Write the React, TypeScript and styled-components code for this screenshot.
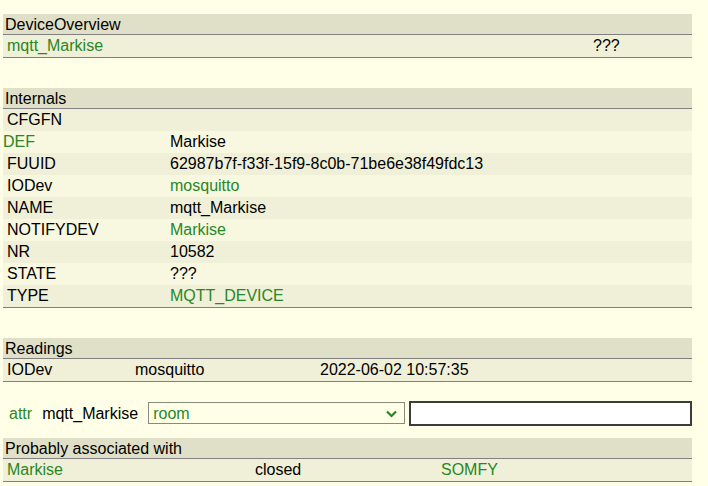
import React from "react";
import styled, { createGlobalStyle } from "styled-components";

const Global = createGlobalStyle`
  html, body {
    margin: 0;
    background: #ffffe7;
  }
  body {
    font-family: "Liberation Sans", Arial, sans-serif;
    font-size: 16px;
    color: #000;
  }
`;

const Page = styled.div`
  padding: 14px 16px 0 3px;
  width: 689px;
`;

const Block = styled.div<{ $gap?: number }>`
  margin-bottom: ${(p) => p.$gap ?? 30}px;
  border-bottom: 1px solid #808080;
`;

const Header = styled.div`
  height: 20px;
  line-height: 22px;
  overflow: hidden;
  padding-left: 2px;
  background: #e0e0c8;
  border-bottom: 1px solid #808080;
`;

const Row = styled.div<{ $cols: string; $even?: boolean }>`
  display: grid;
  grid-template-columns: ${(p) => p.$cols};
  align-items: center;
  height: 22px;
  padding-left: 4px;
  background: ${(p) => (p.$even ? "#f8f8e0" : "#f0f0d8")};
  white-space: nowrap;
`;

const Cell = styled.span<{ $link?: boolean; $shift?: number }>`
  color: ${(p) => (p.$link ? "#278727" : "#000")};
  margin-left: ${(p) => p.$shift ?? 0}px;
`;

const AttrRow = styled.div`
  display: flex;
  align-items: center;
  height: 25px;
  margin: 19px 0 12px;
`;

const AttrLabel = styled.span<{ $link?: boolean; $left: number }>`
  color: ${(p) => (p.$link ? "#278727" : "#000")};
  margin-left: ${(p) => p.$left}px;
`;

const SelectBox = styled.div`
  position: relative;
  width: 257px;
  height: 22px;
  box-sizing: border-box;
  border: 1px solid #8a8a7a;
  margin-left: 10px;
  align-self: flex-start;
  margin-top: 1px;
`;

const Select = styled.select`
  appearance: none;
  width: 100%;
  height: 100%;
  border: none;
  background: transparent;
  color: #278727;
  font: inherit;
  padding: 0 0 0 4px;
  outline: none;
`;

const Chevron = styled.svg`
  position: absolute;
  right: 7px;
  top: 7px;
  pointer-events: none;
`;

const TextInput = styled.input`
  width: 284px;
  height: 25px;
  box-sizing: border-box;
  margin-left: 4px;
  border: 2px solid #3c3c3c;
  background: #fff;
  font: inherit;
  padding: 0 4px;
`;

const internals: { name: string; value: string; nameLink?: boolean; valueLink?: boolean }[] = [
  { name: "CFGFN", value: "" },
  { name: "DEF", value: "Markise", nameLink: true },
  { name: "FUUID", value: "62987b7f-f33f-15f9-8c0b-71be6e38f49fdc13" },
  { name: "IODev", value: "mosquitto", valueLink: true },
  { name: "NAME", value: "mqtt_Markise" },
  { name: "NOTIFYDEV", value: "Markise", valueLink: true },
  { name: "NR", value: "10582" },
  { name: "STATE", value: "???" },
  { name: "TYPE", value: "MQTT_DEVICE", valueLink: true },
];

const App = () => {
  return (
    <Page>
      <Global />
      <Block>
        <Header>DeviceOverview</Header>
        <Row $cols="586px 1fr">
          <Cell $link>mqtt_Markise</Cell>
          <Cell>???</Cell>
        </Row>
      </Block>

      <Block>
        <Header>Internals</Header>
        {internals.map((it, i) => (
          <Row key={it.name} $cols="163px 1fr" $even={i % 2 === 1}>
            <Cell $link={it.nameLink} $shift={it.nameLink ? -4 : 0}>
              {it.name}
            </Cell>
            <Cell $link={it.valueLink}>{it.value}</Cell>
          </Row>
        ))}
      </Block>

      <Block $gap={0}>
        <Header>Readings</Header>
        <Row $cols="128px 185px 1fr">
          <Cell>IODev</Cell>
          <Cell>mosquitto</Cell>
          <Cell>2022-06-02 10:57:35</Cell>
        </Row>
      </Block>

      <AttrRow>
        <AttrLabel $link $left={6}>attr</AttrLabel>
        <AttrLabel $left={10}>mqtt_Markise</AttrLabel>
        <SelectBox>
          <Select defaultValue="room">
            <option value="room">room</option>
          </Select>
          <Chevron width="11" height="8" viewBox="0 0 11 8">
            <path d="M1 1.5 L5.5 6 L10 1.5" fill="none" stroke="#278727" strokeWidth="2.2" />
          </Chevron>
        </SelectBox>
        <TextInput type="text" />
      </AttrRow>

      <Block $gap={0}>
        <Header>Probably associated with</Header>
        <Row $cols="248px 186px 1fr">
          <Cell $link>Markise</Cell>
          <Cell>closed</Cell>
          <Cell $link>SOMFY</Cell>
        </Row>
      </Block>
    </Page>
  );
};

export default App;
